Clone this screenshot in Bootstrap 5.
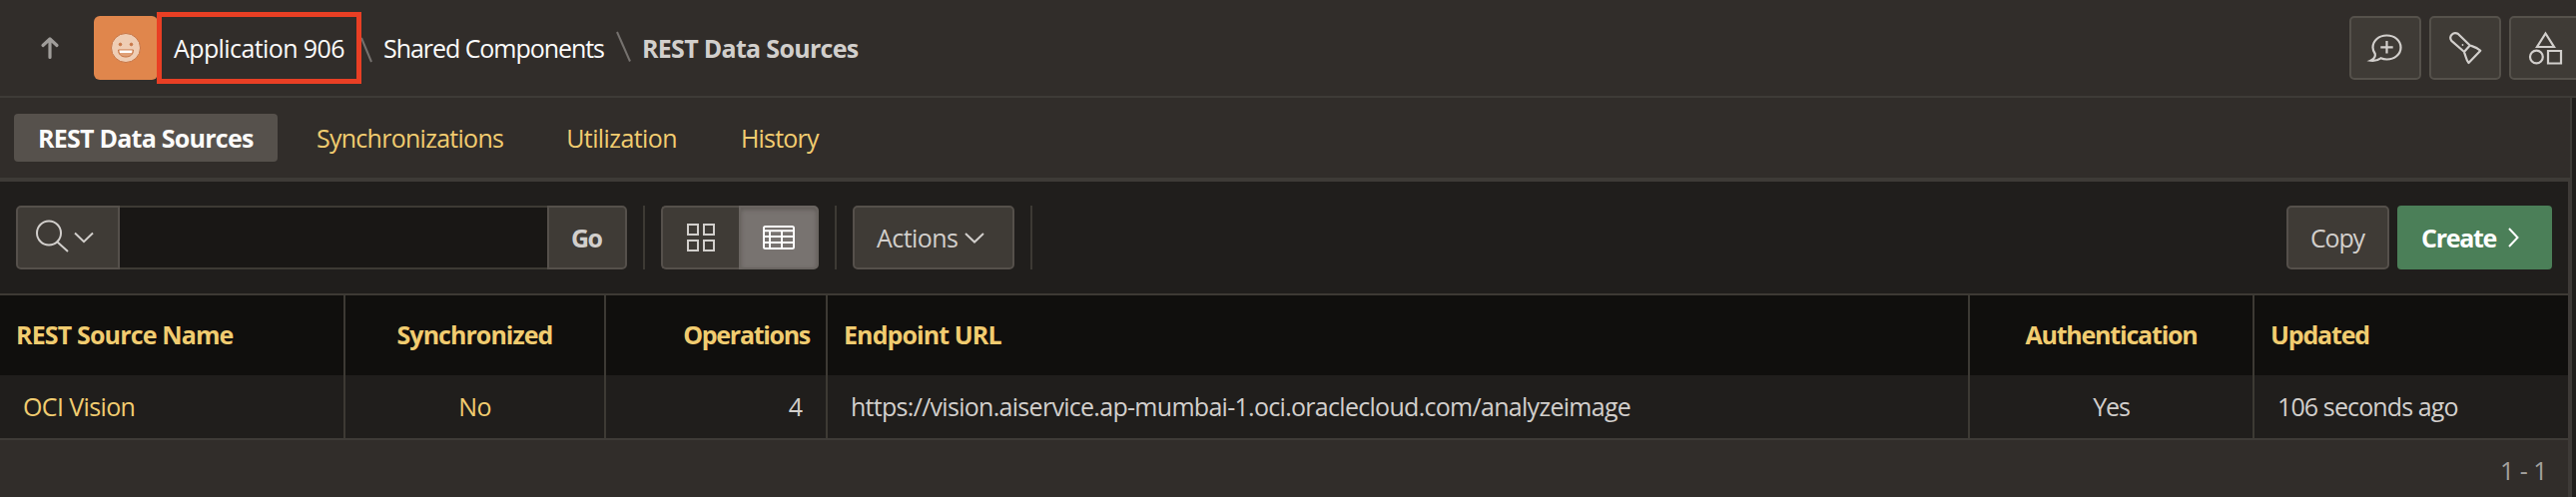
<!DOCTYPE html>
<html lang="en" data-bs-theme="dark">
<head>
<meta charset="utf-8">
<title>REST Data Sources</title>
<link href="https://cdn.jsdelivr.net/npm/bootstrap@5.3.0/dist/css/bootstrap.min.css" rel="stylesheet">
<script src="https://cdn.jsdelivr.net/npm/bootstrap@5.3.0/dist/js/bootstrap.bundle.min.js"></script>
<style>
body{background:#312d2a;font-family:"Open Sans","Noto Sans",sans-serif;font-size:25px;line-height:34px;color:#d2cfcc;height:498px;overflow:hidden;white-space:nowrap}
a{text-decoration:none;color:#f1cc70}
svg{display:block;flex:none;overflow:visible;fill:none;stroke:#d2cfcc;stroke-width:2}
.topbar{height:98px;border-bottom:2px solid #3e3b37;padding-left:41px}
.upicon{margin-right:35px}
.appicon{width:64px;height:64px;background:#e0864c;border-radius:6px}
.callout{width:205px;height:72px;border:5px solid #e93f24;margin-left:-1px;padding-left:12px;z-index:1}
.crumb{color:#fcfbfa;padding-bottom:1px}
.current{color:#d2cfcc;font-weight:700;letter-spacing:-.69px;padding-bottom:1px}
.slash{stroke:#75716e}
.toolset{gap:8px;margin-right:-5px}
.tool{width:72px;height:64px;border:2px solid #55514b;border-radius:5px;background:#3f3b36}
.tool svg{stroke-width:2.2}
.stage{height:400px;background:#201e1c}
.main{width:2576px;height:400px;background:#312d2a}
.tabsbar{height:82px;border-bottom:2px solid #3e3b37;border-right:2px solid #3e3b37;padding-left:14px}
.tabsbar a{padding-bottom:1px}
.tab-on{width:264px;height:48px;border-radius:4px;background:#56514c;color:#fcfbfa;font-weight:700;padding-left:24px;letter-spacing:-.75px}
.report{height:318px;border-top:2px solid #3e3b37;border-right:4px solid #3e3a37}
.tools{height:112px;background:#201e1c;padding:0 16px}
.box{height:64px;border:2px solid #55504b;border-radius:5px;background:#3f3b36;color:#d2cfcc}
.lend{border-radius:5px 0 0 5px}
.rend{border-radius:0 5px 5px 0}
.search{width:428px;height:64px;border-radius:0;background:#191715!important;border:solid #3d3a34;border-width:2px 0;padding:0}
.rule{width:2px;height:64px;background:#3d3a34;margin:0 16px}
.pressed{background:#787370;border-color:#6a6561;box-shadow:inset 0 2px 4px #5f5a56}
.create{width:155px;height:64px;border-radius:4px;background:#4b7f58;color:#fff;font-weight:700;padding-left:24px;margin-left:8px;letter-spacing:-1.3px}
.grid{table-layout:fixed;width:2572px;border-top:2px solid #3d3a34;border-bottom:2px solid #3e3b37;border-collapse:separate;border-spacing:0}
.grid th,.grid td{border-right:2px solid #3d3a34;vertical-align:middle}
.grid th{height:80px;padding:0 16px 2px;background:#100f0d;color:#f1cc70;font-weight:700}
.grid td{height:63px;padding:0 23px 1px;background:#201e1c;color:#d2cfcc}
.grid tr>:last-child{border-right:0}
.foot{color:#a3a09d;padding:13px 21px 0 0;letter-spacing:-.5px}
</style>
</head>
<body>
<header class="topbar d-flex align-items-center">
  <svg class="upicon" width="18" height="22" viewBox="0 0 18 22" style="stroke:#a09d9a;stroke-width:3.2" stroke-linecap="round" stroke-linejoin="round"><path d="M9 20.500V2M2 8.500l7-6.500 7 6.500"/></svg>
  <div class="appicon d-flex align-items-center justify-content-center">
    <svg width="32" height="32" viewBox="0 0 32 32" style="stroke:#c77545;stroke-width:1"><circle cx="16" cy="16" r="14.500" fill="#efcdb4"/><circle cx="10.500" cy="12.500" r="1.300" fill="#c77545"/><circle cx="21.500" cy="12.500" r="1.300" fill="#c77545"/><path d="M8.500 18h15c0 4.500-3 7-7.500 7s-7.500-2.500-7.500-7z" fill="#e0a077"/><path d="M9.500 18.500h13l-.5 2.500H10z" fill="#fff" stroke="none"/></svg>
  </div>
  <div class="callout position-relative d-flex align-items-center"><a class="crumb" style="letter-spacing:-.6px" href="#">Application 906</a></div>
  <svg class="slash" width="12" height="34" viewBox="0 0 12 34"><path d="M0 7l10 24"/></svg>
  <a class="crumb" style="letter-spacing:-1.05px;margin-left:10px" href="#">Shared Components</a>
  <svg class="slash" width="16" height="34" viewBox="0 0 16 34" style="margin:0 11px 0 11px"><path d="M2 1l13 29.500"/></svg>
  <span class="current">REST Data Sources</span>
  <div class="toolset d-flex ms-auto">
    <div class="tool d-flex align-items-center justify-content-center"><svg width="32" height="32"><path d="M11.500 26.300c2 .9 4 1.200 6 1.200 8 0 14-5.300 14-12s-6-12-14-12-14 5.300-14 12c0 2.500.9 4.500 2.300 6.500.5 2.500-1 5-4.500 6.700 4 .5 7.500-.5 10.200-2.400zM17.500 9v12.500M11.300 15.300h12.400"/></svg></div>
    <div class="tool d-flex align-items-center justify-content-center"><svg width="32" height="32"><path d="M14.500 19.500L2.300 8.800C-.8 4.500 4-.8 8.700 1.800L20.800 13.500l-6.300 7M20.800 13.500c3.500 1.200 7 1.700 10.500 5.300L19.500 31c-3-3.500-2.700-7-4.700-11" stroke-linejoin="round"/><circle cx="13.500" cy="13" r=".9" fill="#d2cfcc" stroke="none"/></svg></div>
    <div class="tool d-flex align-items-center justify-content-center"><svg width="32" height="32"><path d="M16.500 1.500L25 15H8z"/><circle cx="7.400" cy="25" r="6.400"/><path d="M19 19h13v12.500H19z"/></svg></div>
  </div>
</header>
<div class="stage">
<main class="main">
  <nav class="tabsbar d-flex align-items-center">
    <a class="tab-on d-flex align-items-center" href="#">REST Data Sources</a>
    <a style="letter-spacing:-.73px;margin-left:39px" href="#">Synchronizations</a>
    <a style="letter-spacing:-.6px;margin-left:63px" href="#">Utilization</a>
    <a style="letter-spacing:-.8px;margin-left:64px" href="#">History</a>
  </nav>
  <section class="report">
    <div class="tools d-flex align-items-center">
      <div class="box lend d-flex align-items-center" style="width:104px;padding-left:17px">
        <svg width="60" height="34"><circle cx="14" cy="12.500" r="12"/><path d="M22.500 21.500L33 31M40 12.500l9 8.700 9-8.700"/></svg>
      </div>
      <input class="search form-control" aria-label="Search">
      <div class="box rend d-flex align-items-center fw-bold" style="width:80px;padding-left:22px;letter-spacing:-1.500px">Go</div>
      <div class="rule"></div>
      <div class="box lend d-flex align-items-center border-end-0" style="width:78px;padding-left:25px"><svg width="28" height="28"><path d="M0 1h10v10H0zM16 1h10v10H16zM0 17h10v10H0zM16 17h10v10H16z"/></svg></div>
      <div class="box rend pressed d-flex align-items-center" style="width:80px;padding-left:22px"><svg width="32" height="24" style="stroke:#fff"><rect x="1" y="1" width="30" height="22" rx="1.500"/><path d="M1 5.200h30M1 11h30M1 17h30M7 5v18M19 5v18"/></svg></div>
      <div class="rule"></div>
      <div class="box d-flex align-items-center" style="width:162px;padding-left:22px;letter-spacing:-.55px">Actions<svg width="18" height="10" style="margin-left:8px"><path d="M0 1l9 8.500L18 1"/></svg></div>
      <div class="rule"></div>
      <div class="box d-flex align-items-center ms-auto" style="width:103px;padding-left:22px;letter-spacing:-1.200px">Copy</div>
      <div class="create d-flex align-items-center">Create<svg width="10" height="18" style="stroke:#fff;margin-left:12px"><path d="M1 0l8.500 9L1 18"/></svg></div>
    </div>
    <table class="grid">
      <colgroup><col style="width:346px"><col style="width:261px"><col style="width:222px"><col style="width:1144px"><col style="width:285px"><col style="width:314px"></colgroup>
      <tr><th><span style="letter-spacing:-.85px">REST Source Name</span></th><th class="text-center"><span style="letter-spacing:-.96px">Synchronized</span></th><th class="text-end"><span style="letter-spacing:-1.300px">Operations</span></th><th><span style="letter-spacing:-.9px">Endpoint URL</span></th><th class="text-center"><span style="letter-spacing:-1.200px">Authentication</span></th><th><span style="letter-spacing:-1.150px">Updated</span></th></tr>
      <tr><td><a style="letter-spacing:-.62px" href="#">OCI Vision</a></td><td class="text-center"><a style="letter-spacing:-.6px" href="#">No</a></td><td class="text-end">4</td><td><span style="letter-spacing:-.71px">https://vision.aiservice.ap-mumbai-1.oci.oraclecloud.com/analyzeimage</span></td><td class="text-center"><span style="letter-spacing:-1.200px">Yes</span></td><td><span style="letter-spacing:-.88px">106 seconds ago</span></td></tr>
    </table>
    <div class="foot text-end">1 - 1</div>
  </section>
</main>
</div>
</body>
</html>
